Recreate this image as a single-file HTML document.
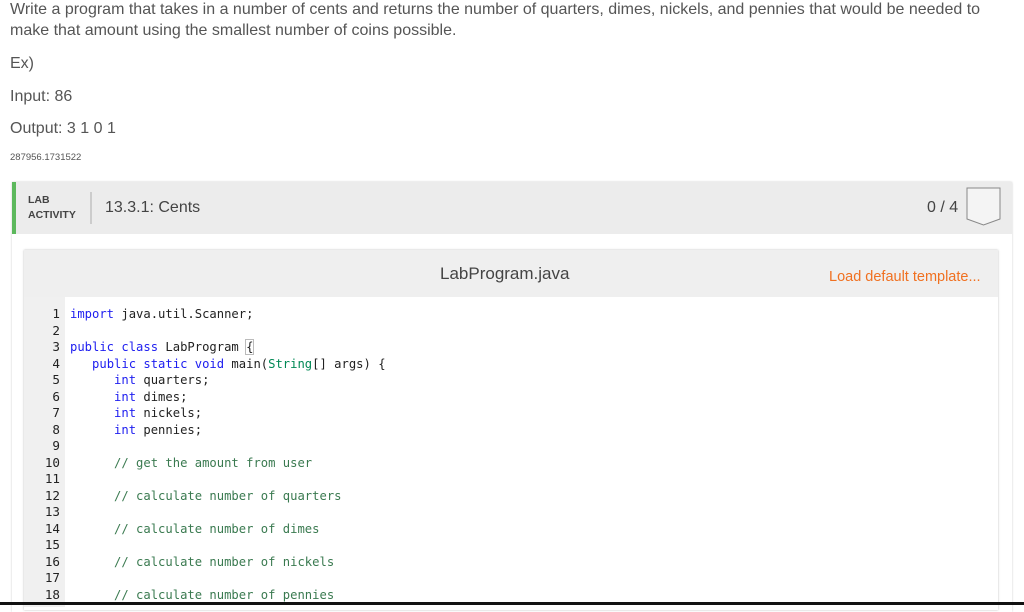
<!DOCTYPE html>
<html><head><style>
body{margin:0;width:1024px;height:605px;overflow:hidden;background:#fff;font-family:"Liberation Sans",sans-serif;position:relative;color:#333}
.p{position:absolute;left:10px;font-size:16px;color:#555;font-weight:300}
.card{position:absolute;left:12px;top:182px;width:1000px;height:430px;background:#fff;box-shadow:0 0 2px #ccc}
.hdr{position:absolute;left:0;top:0;width:1000px;height:52px;background:#ececec;border-left:4px solid #5cb85c;box-sizing:border-box}
.ed{position:absolute;left:24px;top:250px;width:974px;height:360px;background:#fff;box-shadow:0 0 2px #bbb}
.eh{height:47px;background:#efefef;position:relative}
.code{position:absolute;top:306px;left:24px;font-family:"DejaVu Sans Mono","Liberation Mono",monospace;font-size:12.2px;line-height:16.5px;white-space:pre}
.g{position:absolute;left:24px;top:297px;width:41px;height:310px;background:#f0f0f0}
.k{color:#1d1df0}.c{color:#3a7a50}.t{color:#008855}
</style></head><body>
<div class="p" style="top:-1px;line-height:21px;width:1000px">Write a program that takes in a number of cents and returns the number of quarters, dimes, nickels, and pennies that would be needed to make that amount using the smallest number of coins possible.</div>
<div class="p" style="top:55px">Ex)</div>
<div class="p" style="top:88px">Input: 86</div>
<div class="p" style="top:120px">Output: 3 1 0 1</div>
<div class="p" style="top:152px;font-size:9.5px">287956.1731522</div>
<div class="card"><div class="hdr">
<div style="position:absolute;left:12px;top:11px;font-size:10.5px;font-weight:bold;line-height:15px;color:#444">LAB<br>ACTIVITY</div>
<div style="position:absolute;left:74px;top:10px;width:2px;height:32px;background:#ccc"></div>
<div style="position:absolute;left:89px;top:17px;font-size:16px;color:#444">13.3.1: Cents</div>
<div style="position:absolute;left:911px;top:17px;font-size:16px;color:#444">0 / 4</div>
<svg style="position:absolute;left:950px;top:5px" width="36" height="40"><path d="M1 1H34V32L17.5 38L1 32Z" fill="#f4f4f4" stroke="#888" stroke-width="1"/></svg>
</div></div>
<div class="ed"><div class="eh">
<div style="position:absolute;left:416px;top:14px;font-size:17px;color:#444">LabProgram.java</div>
<div style="position:absolute;left:805px;top:19px;font-size:14.5px;color:#f07020">Load default template...</div>
</div></div>
<div class="g"></div>
<div class="code" style="text-align:right;width:36px;left:24px;color:#222;font-size:12.6px">1
2
3
4
5
6
7
8
9
10
11
12
13
14
15
16
17
18</div>
<div class="code" style="left:70px;color:#222"><span class="k">import</span> java.util.Scanner;

<span class="k">public class</span> LabProgram <span style="outline:1px solid #bbb">{</span>
   <span class="k">public static void</span> main(<span class="t">String</span>[] args) {
      <span class="k">int</span> quarters;
      <span class="k">int</span> dimes;
      <span class="k">int</span> nickels;
      <span class="k">int</span> pennies;

      <span class="c">// get the amount from user</span>

      <span class="c">// calculate number of quarters</span>

      <span class="c">// calculate number of dimes</span>

      <span class="c">// calculate number of nickels</span>

      <span class="c">// calculate number of pennies</span></div>
<div style="position:absolute;left:0;top:602px;width:1024px;height:3px;background:#111"></div>
</body></html>
